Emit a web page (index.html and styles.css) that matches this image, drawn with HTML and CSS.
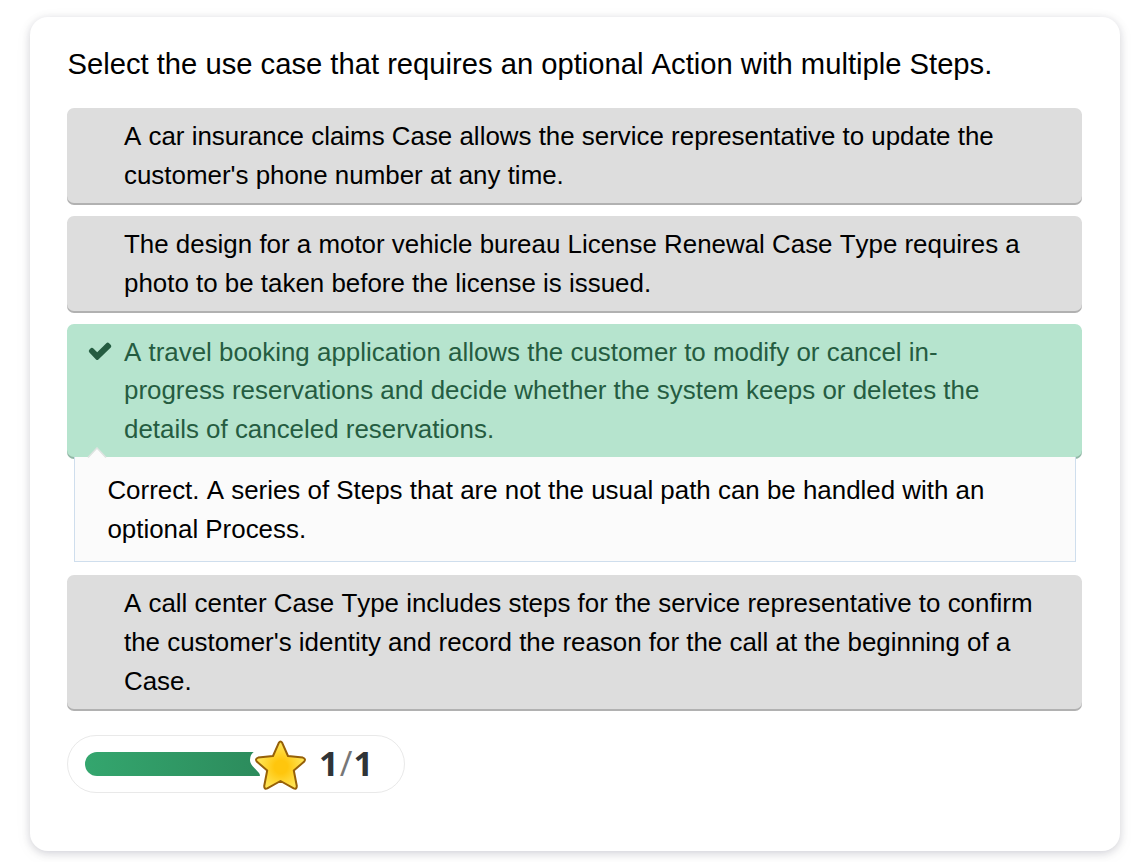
FILE: index.html
```html
<!DOCTYPE html>
<html lang="en">
<head>
<meta charset="utf-8">
<title>Quiz question</title>
<link rel="stylesheet" href="styles.css">
</head>
<body>
<main class="card">
  <h1 class="question">Select the use case that requires an optional Action with multiple Steps.</h1>
  <ul class="answers">
    <li class="answer">A car insurance claims Case allows the service representative to update the<br>customer's phone number at any time.</li>
    <li class="answer">The design for a motor vehicle bureau License Renewal Case Type requires a<br>photo to be taken before the license is issued.</li>
    <li class="answer answer-correct">
      <svg class="check" viewBox="0 0 24 19"><path d="M1.5 7.5L3 6Q4.2 5.2 5.4 6.4L9.2 10.2L18.3 1.2Q19.8 0 21.1 1.2L22.9 3Q23.8 4.2 22.8 5.4L10.4 17.5Q9.2 18.5 8 17.5L1.4 10.6Q0 9 1.5 7.5Z" fill="#255c41"/></svg>A travel booking application allows the customer to modify or cancel in-<br>progress reservations and decide whether the system keeps or deletes the<br>details of canceled reservations.</li>
    <li class="feedback">
      <svg class="pointer" viewBox="0 0 20 11"><path d="M1 11 L10 1 L19 11Z" fill="#fbfbfb"/><path d="M1 10.5 L10 1 L19 10.5" fill="none" stroke="#dfe3e1" stroke-width="1.5"/></svg>Correct. A series of Steps that are not the usual path can be handled with an<br>optional Process.</li>
    <li class="answer">A call center Case Type includes steps for the service representative to confirm<br>the customer's identity and record the reason for the call at the beginning of a<br>Case.</li>
  </ul>
  <div class="score">
    <div class="bar"></div>
    <svg class="star" viewBox="246 736 64 58">
      <defs><radialGradient id="gold" gradientUnits="userSpaceOnUse" cx="281" cy="767" r="22"><stop offset="0.3" stop-color="#ffc60d"/><stop offset="1" stop-color="#ffe352"/></radialGradient></defs>
      <path class="halo" d="M255 751Q250 754 250 760Q250 763 252.5 766L259 773Q260.5 775 259.5 777H290V751Z"/>
      <path class="star-shape" d="M278.8 742.8Q280.5 740.2 282.2 742.8L288 756L302.8 757.6Q306.4 758.8 304 761.8L293.8 770.5L296.8 786Q296.8 789.6 293.7 788.4L280.5 781L267.3 788.4Q264.2 789.6 264.2 786L267.2 770.5L257 761.8Q254.6 758.8 258.2 757.6L273 756Z"/>
    </svg>
    <div class="points">1<span class="slash">/</span>1</div>
  </div>
</main>
</body>
</html>
```
FILE: styles.css
```css
* { box-sizing: border-box; }
body {
  margin: 0;
  height: 862px;
  padding: 17px 11px 0 30px;
  overflow: hidden;
  background: #fff;
  color: #000;
  font-family: "Liberation Sans", Arial, sans-serif;
  font-kerning: none;
}
.card {
  height: 834px;
  padding: 25px 38px 0 37px;
  border-radius: 18px;
  background: #fff;
  box-shadow: 0 2px 8px rgba(20, 20, 45, 0.17), 0 4px 20px rgba(20, 20, 45, 0.04);
}
.question {
  height: 66px;
  margin: 0;
  padding-left: 0.5px;
  font-size: 29.2px;
  font-weight: 400;
  line-height: 44px;
  white-space: nowrap;
}
.answers { margin: 0; padding: 0; list-style: none; }
.answer {
  position: relative;
  height: 95px;
  margin-bottom: 13px;
  padding: 9px 0 0 57px;
  border-radius: 7px;
  background: #ddd;
  box-shadow: 0 2px 0 #b1b1b1;
  font-size: 25.92px;
  line-height: 38.8px;
  white-space: nowrap;
}
.answer:last-child { height: 134px; margin: 0; }
.answer-correct {
  height: 133px;
  margin: 0;
  background: #b6e4ce;
  color: #255c41;
  box-shadow: 0 2px 0 #91b6a5;
  line-height: 38.4px;
}
.check {
  position: absolute;
  left: 21px;
  top: 18px;
  width: 24px;
  height: 19px;
}
.feedback {
  position: relative;
  height: 105px;
  margin: 0 6px 13px 7px;
  padding: 14px 0 0 32.4px;
  border: 1px solid #cfdeed;
  border-top: 0;
  background: #fbfbfb;
  font-size: 25.92px;
  line-height: 38.8px;
  white-space: nowrap;
}
.pointer {
  position: absolute;
  left: 12px;
  top: -10px;
  width: 20px;
  height: 11px;
}
.score {
  position: relative;
  display: flex;
  align-items: center;
  width: 338px;
  height: 58px;
  margin-top: 26px;
  padding-left: 17px;
  border: 1px solid #e9e9e9;
  border-radius: 29px;
}
.bar {
  width: 178px;
  height: 24px;
  border-radius: 12px 0 0 12px;
  background: linear-gradient(90deg, #34a66e, #2c8b5c);
}
.star {
  position: absolute;
  left: 178px;
  top: 0;
  width: 64px;
  height: 58px;
}
.halo { fill: #fff; }
.star-shape { fill: url(#gold); stroke: #966008; stroke-width: 2px; stroke-linejoin: round; }
.points {
  display: flex;
  gap: 1px;
  margin-left: 56px;
  padding-bottom: 2px;
  color: #303437;
  font-family: "Open Sans", sans-serif;
  font-size: 34.5px;
  font-weight: 700;
  line-height: 54px;
}
.slash { color: #777; font-weight: 400; }
```
